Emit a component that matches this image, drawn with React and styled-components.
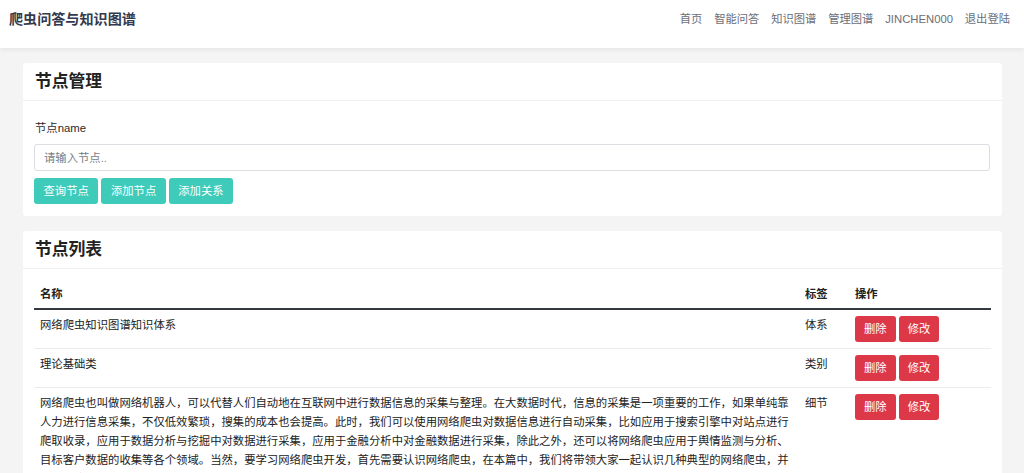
import styled, { createGlobalStyle } from "styled-components";

const GlobalStyle = createGlobalStyle`
  html, body {
    margin: 0;
    padding: 0;
    background: #f4f4f5;
    font-family: "Liberation Sans", "Noto Sans CJK SC", sans-serif;
    color: #212529;
  }
  * { box-sizing: border-box; }
`;

const rows = [
  { name: "网络爬虫知识图谱知识体系", tag: "体系" },
  { name: "理论基础类", tag: "类别" },
  {
    name:
      "网络爬虫也叫做网络机器人，可以代替人们自动地在互联网中进行数据信息的采集与整理。在大数据时代，信息的采集是一项重要的工作，如果单纯靠人力进行信息采集，不仅低效繁琐，搜集的成本也会提高。此时，我们可以使用网络爬虫对数据信息进行自动采集，比如应用于搜索引擎中对站点进行爬取收录，应用于数据分析与挖掘中对数据进行采集，应用于金融分析中对金融数据进行采集，除此之外，还可以将网络爬虫应用于舆情监测与分析、目标客户数据的收集等各个领域。当然，要学习网络爬虫开发，首先需要认识网络爬虫，在本篇中，我们将带领大家一起认识几种典型的网络爬虫，并了解网络爬虫的各项常见功能。",
    tag: "细节",
  },
];

export default function App() {
  return (
    <>
      <GlobalStyle />
      <Navbar>
        <Brand>爬虫问答与知识图谱</Brand>
        <NavLinks>
          <NavLink>首页</NavLink>
          <NavLink>智能问答</NavLink>
          <NavLink>知识图谱</NavLink>
          <NavLink>管理图谱</NavLink>
          <NavLink>JINCHEN000</NavLink>
          <NavLink>退出登陆</NavLink>
        </NavLinks>
      </Navbar>
      <Main>
        <Card>
          <CardHeader>节点管理</CardHeader>
          <CardBody $top={18} $bottom={12}>
            <Label>节点name</Label>
            <Input placeholder="请输入节点.." />
            <ButtonRow>
              <Button>查询节点</Button>
              <Button>添加节点</Button>
              <Button>添加关系</Button>
            </ButtonRow>
          </CardBody>
        </Card>
        <Card>
          <CardHeader>节点列表</CardHeader>
          <CardBody $top={10} $bottom={12}>
            <Table>
              <colgroup>
                <col style={{ width: 765 }} />
                <col style={{ width: 50 }} />
                <col />
              </colgroup>
              <thead>
                <tr>
                  <Th>名称</Th>
                  <Th>标签</Th>
                  <Th>操作</Th>
                </tr>
              </thead>
              <tbody>
                {rows.map((r) => (
                  <tr key={r.tag}>
                    <Td>{r.name}</Td>
                    <Td>{r.tag}</Td>
                    <Td>
                      <Actions>
                        <Button $danger>删除</Button>
                        <Button $danger>修改</Button>
                      </Actions>
                    </Td>
                  </tr>
                ))}
              </tbody>
            </Table>
          </CardBody>
        </Card>
      </Main>
    </>
  );
}

const Navbar = styled.nav`
  height: 48px;
  background: #fff;
  display: flex;
  justify-content: space-between;
  align-items: flex-start;
  padding: 9px 14px 0 9px;
  box-shadow: 0 2px 5px rgba(0, 0, 0, 0.06);
  position: relative;
`;

const Brand = styled.div`
  font-size: 14.1px;
  font-weight: 700;
  line-height: 20px;
  color: #343a4e;
`;

const NavLinks = styled.div`
  display: flex;
  gap: 11.8px;
`;

const NavLink = styled.a`
  font-size: 11.3px;
  line-height: 20px;
  color: #6b6e78;
  cursor: pointer;
`;

const Main = styled.main`
  padding: 15px 22px 0 23px;
  display: flex;
  flex-direction: column;
  gap: 15px;
`;

const Card = styled.section`
  background: #fff;
  border-radius: 3px;
`;

const CardHeader = styled.h2`
  margin: 0;
  padding: 8px 12px;
  font-size: 16.8px;
  font-weight: 600;
  line-height: 21px;
  color: #222;
  border-bottom: 1px solid #f0f0f2;
`;

const CardBody = styled.div`
  padding: ${(p) => p.$top}px 11px ${(p) => p.$bottom}px 11px;
`;

const Label = styled.div`
  font-size: 11.35px;
  line-height: 19px;
  color: #2a2a2a;
  padding-left: 1px;
  margin-bottom: 6px;
`;

const Input = styled.input`
  display: block;
  width: 956px;
  height: 27px;
  border: 1px solid #dcdce2;
  border-radius: 3px;
  padding: 0 9px;
  font-family: inherit;
  font-size: 11.35px;
  color: #333;
  outline: none;
  &::placeholder {
    color: #7a7d85;
  }
`;

const ButtonRow = styled.div`
  display: flex;
  gap: 3px;
  margin-top: 7px;
`;

const Button = styled.button`
  height: 26px;
  padding: 0 ${(p) => (p.$danger ? 9 : 9.5)}px;
  border: none;
  border-radius: 3px;
  background: ${(p) => (p.$danger ? "#dc3848" : "#3ecbba")};
  color: #fff;
  font-family: inherit;
  font-size: 11.35px;
  line-height: 26px;
  cursor: pointer;
`;

const Table = styled.table`
  width: 957px;
  border-collapse: collapse;
  table-layout: fixed;
  font-size: 11.35px;
  line-height: 19px;
  color: #222;
`;

const Th = styled.th`
  text-align: left;
  font-weight: 700;
  padding: 6px 6px 4px;
  border-bottom: 2px solid #343a40;
`;

const Td = styled.td`
  vertical-align: top;
  padding: 6px 6px 6px;
  border-bottom: 1px solid #ececef;
`;

const Actions = styled.div`
  display: flex;
  gap: 3px;
`;
